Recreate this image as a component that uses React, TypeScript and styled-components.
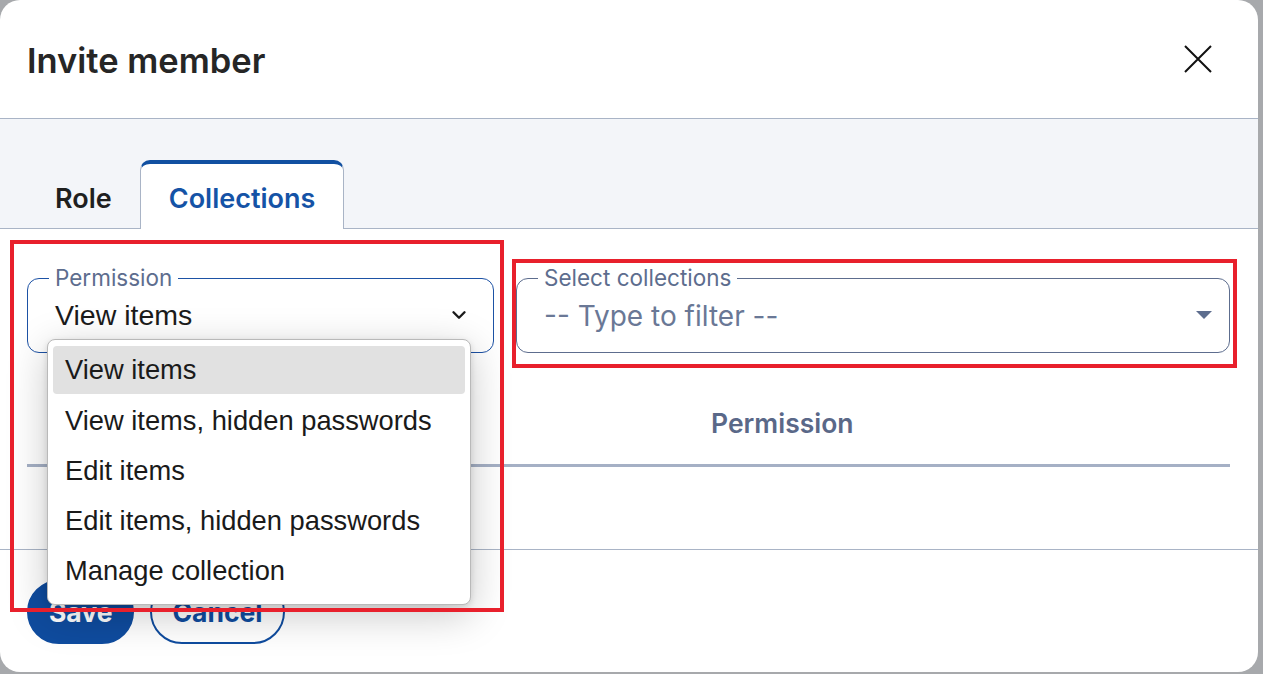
import React from "react";
import styled, { createGlobalStyle } from "styled-components";
import { ChevronDown } from "lucide-react";

const Global = createGlobalStyle`
  html, body { margin: 0; padding: 0; }
  body { background: #a7a9ac; font-family: "Inter", "Noto Sans", sans-serif; width: 1263px; height: 674px; overflow: hidden; }
`;

const Dialog = styled.div`
  position: relative;
  width: 1258px;
  height: 672px;
  background: #fff;
  border-radius: 20px;
  display: flex;
  flex-direction: column;
  overflow: hidden;
`;

const Header = styled.header`
  height: 118px;
  border-bottom: 1px solid #a9b4c6;
  display: flex;
  align-items: center;
  justify-content: space-between;
  padding: 0 45px 0 27px;
  box-sizing: content-box;
`;

const Title = styled.h1`
  margin: 0;
  font-size: 34.5px;
  font-weight: 600;
  color: #262626;
  letter-spacing: 0;
  padding-top: 2px;
`;

const CloseButton = styled.button`
  border: 0;
  background: none;
  padding: 0;
  width: 30px;
  height: 30px;
  display: flex;
  align-items: center;
  justify-content: center;
  cursor: pointer;
`;

const TabBar = styled.div`
  height: 109px;
  background: #f3f5f9;
  border-bottom: 1px solid #a9b4c6;
  display: flex;
  align-items: flex-end;
  padding-left: 27px;
`;

const Tab = styled.div<{ $active?: boolean }>`
  height: 69px;
  padding: 0 28px;
  padding-top: ${(p) => (p.$active ? "4px" : "8px")};
  display: flex;
  align-items: center;
  font-size: 27px;
  font-weight: 600;
  margin-bottom: -1px;
  color: ${(p) => (p.$active ? "#1553a6" : "#1f1f1f")};
  background: ${(p) => (p.$active ? "#fff" : "transparent")};
  border-top: ${(p) => (p.$active ? "4px solid #1150a1" : "0")};
  border-left: ${(p) => (p.$active ? "1px solid #a9b4c6" : "0")};
  border-right: ${(p) => (p.$active ? "1px solid #a9b4c6" : "0")};
  border-radius: 10px 10px 0 0;
  box-sizing: border-box;
`;

const Content = styled.div`
  height: 321px;
  padding: 39px 28px 0 27px;
  box-sizing: border-box;
  border-bottom: 1px solid #a9b4c6;
  display: flex;
  flex-direction: column;
`;

const FieldRow = styled.div`
  display: grid;
  grid-template-columns: 467px 1fr;
  gap: 22px;
`;

const FieldWrap = styled.div`
  position: relative;
`;

const Field = styled.fieldset<{ $focus?: boolean }>`
  margin: 0;
  height: 85px;
  box-sizing: border-box;
  border: 1px solid ${(p) => (p.$focus ? "#1d52a5" : "#5d6d8e")};
  border-radius: 12px;
  padding: 0 26px 0 27px;
  display: flex;
  align-items: center;
  justify-content: space-between;
`;

const Legend = styled.legend`
  padding: 0 6px;
  margin-left: -6px;
  font-size: 22.5px;
  color: #5d6d8e;
  line-height: 20px;
`;

const Value = styled.span`
  font-family: "Liberation Sans", Arial, sans-serif;
  font-size: 28.5px;
  color: #1b1b1b;
  margin-top: -10px;
`;

const Placeholder = styled.span`
  font-size: 28px;
  color: #6a7896;
  margin-top: -9px;
`;

const Triangle = styled.span`
  width: 0;
  height: 0;
  border-left: 8px solid transparent;
  border-right: 8px solid transparent;
  border-top: 8px solid #5d6d8e;
  margin-top: -10px;
  margin-right: -9px;
`;

const Table = styled.div`
  margin-top: 44px;
  display: grid;
  grid-template-columns: 684px 1fr;
  border-bottom: 3px solid #a5b0c5;
  height: 70px;
  box-sizing: border-box;
  align-items: center;
`;

const Th = styled.div`
  font-size: 26.5px;
  font-weight: 600;
  color: #5a6888;
  padding-bottom: 15px;
`;

const Footer = styled.div`
  padding: 30px 27px 0;
  display: flex;
  gap: 16px;
`;

const Button = styled.button<{ $primary?: boolean }>`
  height: 64px;
  border-radius: 32px;
  font-family: "Inter", sans-serif;
  font-size: 26.5px;
  font-weight: 700;
  padding: 0 20px;
  box-sizing: border-box;
  cursor: pointer;
  background: ${(p) => (p.$primary ? "#0f4c9f" : "#fff")};
  color: ${(p) => (p.$primary ? "#fff" : "#0f4c9f")};
  border: 2px solid #0f4c9f;
`;

const Menu = styled.ul`
  position: absolute;
  left: 20px;
  top: 71px;
  width: 424px;
  margin: 0;
  padding: 6px 5px 8px;
  box-sizing: border-box;
  list-style: none;
  background: #fff;
  border: 1px solid #b9b9b9;
  border-radius: 8px;
  box-shadow: 0 10px 40px rgba(0, 0, 0, 0.22), 0 2px 6px rgba(0, 0, 0, 0.12);
  z-index: 5;
`;

const MenuItem = styled.li<{ $selected?: boolean }>`
  height: 50px;
  display: flex;
  align-items: center;
  padding: 0 12px;
  border-radius: 4px;
  font-family: "Liberation Sans", Arial, sans-serif;
  font-size: 27.3px;
  color: #1a1a1a;
  background: ${(p) => (p.$selected ? "#e1e1e1" : "transparent")};
  &:first-child { height: 48px; margin-bottom: 2px; }
`;

const Highlight = styled.div`
  position: absolute;
  border: 4px solid #e8202c;
  box-sizing: border-box;
  pointer-events: none;
  z-index: 10;
`;

const options = [
  "View items",
  "View items, hidden passwords",
  "Edit items",
  "Edit items, hidden passwords",
  "Manage collection",
];

export default function App() {
  return (
    <>
      <Global />
      <Dialog>
        <Header>
          <Title>Invite member</Title>
          <CloseButton aria-label="Close">
            <svg width="30" height="30" viewBox="0 0 30 30">
              <path d="M2 2 L28 28 M28 2 L2 28" stroke="#111" strokeWidth="2" fill="none" />
            </svg>
          </CloseButton>
        </Header>
        <TabBar>
          <Tab>Role</Tab>
          <Tab $active>Collections</Tab>
        </TabBar>
        <Content>
          <FieldRow>
            <FieldWrap>
              <Field $focus>
                <Legend>Permission</Legend>
                <Value>View items</Value>
                <ChevronDown size={22} strokeWidth={2.6} color="#1b1b1b" style={{ marginTop: -10, marginRight: -3 }} />
              </Field>
              <Menu>
                {options.map((o, i) => (
                  <MenuItem key={o} $selected={i === 0}>
                    {o}
                  </MenuItem>
                ))}
              </Menu>
            </FieldWrap>
            <FieldWrap>
              <Field>
                <Legend>Select collections</Legend>
                <Placeholder>-- Type to filter --</Placeholder>
                <Triangle />
              </Field>
            </FieldWrap>
          </FieldRow>
          <Table>
            <Th />
            <Th>Permission</Th>
          </Table>
        </Content>
        <Footer>
          <Button $primary>Save</Button>
          <Button>Cancel</Button>
        </Footer>
        <Highlight style={{ left: 10, top: 240, width: 494, height: 372 }} />
        <Highlight style={{ left: 512, top: 259, width: 725, height: 109 }} />
      </Dialog>
    </>
  );
}
